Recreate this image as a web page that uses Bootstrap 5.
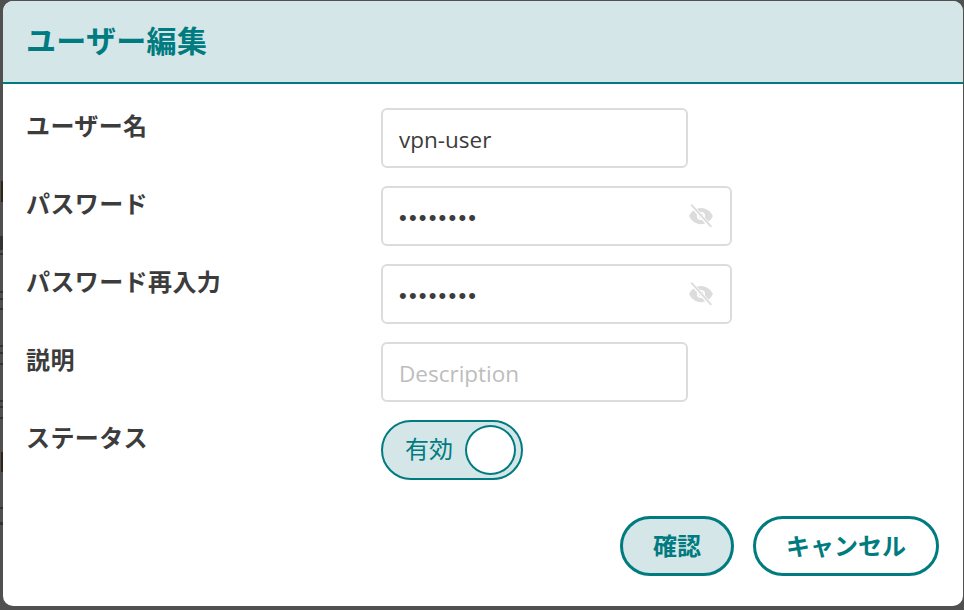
<!DOCTYPE html>
<html lang="ja">
<head>
<meta charset="utf-8">
<link href="https://cdn.jsdelivr.net/npm/bootstrap@5.3.0/dist/css/bootstrap.min.css" rel="stylesheet">
<style>
html,body{height:100%;margin:0;overflow:hidden}
body{background-color:#505050;font-family:Roboto,"Noto Sans CJK JP",sans-serif;color:#3c3c3c;padding:1px 0 4px 3px;
background-repeat:no-repeat;
background-image:
linear-gradient(#2f2418,#2f2418),linear-gradient(#2f2418,#2f2418),
linear-gradient(#333,#333),linear-gradient(#333,#333),linear-gradient(#333,#333),linear-gradient(#333,#333),linear-gradient(#333,#333),linear-gradient(#333,#333),linear-gradient(#333,#333),linear-gradient(#333,#333),linear-gradient(#333,#333),linear-gradient(#333,#333),linear-gradient(#333,#333),linear-gradient(#333,#333),linear-gradient(#333,#333);
background-size:2px 21px,2px 20px,3px 14px,3px 2px,3px 2px,3px 2px,3px 2px,3px 2px,3px 2px,3px 2px,3px 2px,3px 2px,3px 2px,3px 3px,3px 2px;
background-position:1px 181px,1px 452px,0 236px,0 291px,0 298px,0 308px,0 345px,0 352px,0 363px,0 400px,0 406px,0 417px,0 507px,0 522px,0 253px}
.dlg{background:#fff;border-radius:10px;width:960px;height:605px;overflow:hidden}
.dlg-head{height:83px;background:#d4e6e8;border-bottom:2px solid #007b7f;padding-left:23px;color:#007b7f;font-size:30px;font-weight:700;line-height:82px;letter-spacing:.3px}
.dlg-body{padding:24px 24px 0 23px}
.frow{height:78px}
.flabel{width:355px;font-size:24px;font-weight:700;line-height:39px;flex:none;letter-spacing:.4px}
.fbox{height:60px;border:2px solid #dcdcdc;border-radius:6px;padding:3px 16px 0;font-family:"Open Sans",sans-serif;font-size:22.500px;display:flex;align-items:center;background:#fff;width:307px}
.fbox.wide{width:351px;justify-content:space-between;padding:0 15px 0 16px}
.dots{letter-spacing:2.2px;font-family:"Liberation Sans",sans-serif;font-size:22px;padding-top:3px}
.ph{color:#bdbdbd}
.sw{width:142px;height:60px;border:2px solid #007b7f;border-radius:30px;background:#d4e6e8;color:#007b7f;font-size:24px;padding:0 5px 0 22px}
.knob{width:51px;height:50px;border:2px solid #007b7f;border-radius:50%;background:#fff}
.acts{gap:19px;padding:18px 0 0 0}
.pill{height:60px;border:3px solid #007b7f;border-radius:30px;color:#007b7f;font-size:24px;font-weight:700;padding:2px 0 0;background:#fff;--bs-btn-hover-color:#007b7f}
.pill.ok{width:114px;background:#d4e6e8}
.pill.no{width:186px}
</style>
</head>
<body>
<div class="dlg">
<div class="dlg-head">ユーザー編集</div>
<div class="dlg-body">
<div class="frow d-flex"><div class="flabel">ユーザー名</div><div class="fbox">vpn-user</div></div>
<div class="frow d-flex"><div class="flabel">パスワード</div><div class="fbox wide"><span class="dots">••••••••</span><svg width="28" height="26" viewBox="0 0 24 24" fill="#dcdcdc"><path fill-rule="evenodd" d="M12 4.500C7 4.500 2.700 7.900 1 12c1.700 4.100 6 7.500 11 7.500s9.300-3.400 11-7.500c-1.700-4.100-6-7.500-11-7.500zm0 11.300a3.800 3.800 0 1 1 0-7.600 3.800 3.800 0 0 1 0 7.600z"/><circle cx="12" cy="12" r="2.200"/><path d="M3 2 21 22" stroke="#fff" stroke-width="3.500"/><path d="M3 1.500 21.500 22" stroke="#dcdcdc" stroke-width="1.800"/></svg></div></div>
<div class="frow d-flex"><div class="flabel">パスワード再入力</div><div class="fbox wide"><span class="dots">••••••••</span><svg width="28" height="26" viewBox="0 0 24 24" fill="#dcdcdc"><path fill-rule="evenodd" d="M12 4.500C7 4.500 2.700 7.900 1 12c1.700 4.100 6 7.500 11 7.500s9.300-3.400 11-7.500c-1.700-4.100-6-7.500-11-7.500zm0 11.300a3.800 3.800 0 1 1 0-7.600 3.800 3.800 0 0 1 0 7.600z"/><circle cx="12" cy="12" r="2.200"/><path d="M3 2 21 22" stroke="#fff" stroke-width="3.500"/><path d="M3 1.500 21.500 22" stroke="#dcdcdc" stroke-width="1.800"/></svg></div></div>
<div class="frow d-flex"><div class="flabel">説明</div><div class="fbox ph">Description</div></div>
<div class="frow d-flex"><div class="flabel">ステータス</div><div class="sw d-flex align-items-center justify-content-between"><span>有効</span><span class="knob"></span></div></div>
<div class="acts d-flex justify-content-end"><button type="button" class="btn pill ok">確認</button><button type="button" class="btn pill no">キャンセル</button></div>
</div>
</div>
<script src="https://cdn.jsdelivr.net/npm/bootstrap@5.3.0/dist/js/bootstrap.bundle.min.js"></script>
</body>
</html>
